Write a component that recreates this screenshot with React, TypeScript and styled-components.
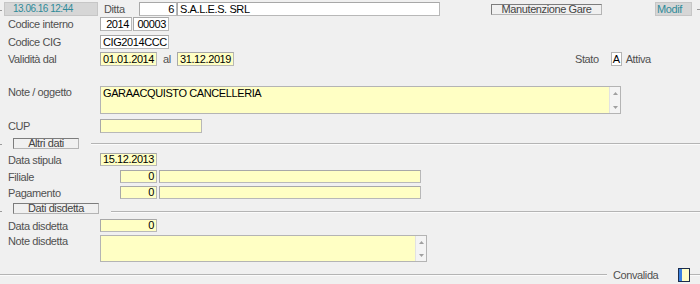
import React from "react";
import styled, { createGlobalStyle } from "styled-components";

const GlobalStyle = createGlobalStyle`
  html, body { margin: 0; padding: 0; background: #f0f0f0; }
  body {
    font-family: "Liberation Sans", Arial, sans-serif;
    font-size: 11px;
    letter-spacing: -0.4px;
    color: #505050;
  }
  * { box-sizing: border-box; }
`;

const Page = styled.div`
  width: 700px;
  height: 284px;
  overflow: hidden;
  display: flex;
  flex-direction: column;
  padding-top: 1px;
  background: #f0f0f0;
`;

const Row = styled.div<{ $h: number; $mt?: number }>`
  display: flex;
  align-items: center;
  height: ${(p) => p.$h}px;
  margin-top: ${(p) => p.$mt ?? 0}px;
  flex: none;
`;

const Label = styled.div<{ $w?: number; $ml?: number; $top?: boolean }>`
  width: ${(p) => p.$w ?? 100}px;
  margin-left: ${(p) => p.$ml ?? 0}px;
  padding-left: ${(p) => (p.$ml !== undefined ? 0 : 8)}px;
  flex: none;
  color: #505050;
  white-space: nowrap;
  ${(p) => (p.$top ? "align-self: flex-start; margin-top: 0px;" : "")}
`;

const Field = styled.div<{
  $w: number;
  $h?: number;
  $yellow?: boolean;
  $right?: boolean;
  $ml?: number;
}>`
  width: ${(p) => p.$w}px;
  height: ${(p) => p.$h ?? 14}px;
  margin-left: ${(p) => p.$ml ?? 0}px;
  flex: none;
  background: ${(p) => (p.$yellow ? "#ffffc4" : "#ffffff")};
  border: 1px solid #b8b8b8;
  border-top-color: #a8a8a8;
  border-left-color: #a8a8a8;
  color: #000;
  line-height: ${(p) => (p.$h ?? 14) - 2}px;
  padding: 0 2px;
  text-align: ${(p) => (p.$right ? "right" : "left")};
  white-space: nowrap;
  overflow: hidden;
`;

const Stamp = styled.div<{ $w: number; $ml: number; $pl: number; $size?: number }>`
  width: ${(p) => p.$w}px;
  height: 14px;
  margin-left: ${(p) => p.$ml}px;
  padding-left: ${(p) => p.$pl}px;
  flex: none;
  background: #d6d6d6;
  border: 1px solid #c6c6c6;
  color: #2f8b99;
  font-size: ${(p) => p.$size ?? 11}px;
  letter-spacing: ${(p) => (p.$size ? "-0.5px" : "-0.4px")};
  line-height: 12px;
  white-space: nowrap;
`;

const Button = styled.div<{ $w: number; $ml: number }>`
  width: ${(p) => p.$w}px;
  height: 11px;
  margin-left: ${(p) => p.$ml}px;
  flex: none;
  background: #f0f0f0;
  border: 1px solid;
  border-color: #7c7c7c #b4b4b4 #b4b4b4 #7c7c7c;
  color: #444;
  line-height: 9px;
  text-align: center;
  white-space: nowrap;
`;

const Tick = styled.div<{ $w: number; $ml?: number; $dy?: number }>`
  width: ${(p) => p.$w}px;
  height: 1px;
  margin-left: ${(p) => p.$ml ?? 0}px;
  margin-top: ${(p) => p.$dy ?? 0}px;
  flex: none;
  background: #9a9a9a;
`;

const Rule = styled.div<{ $ml?: number; $dy?: number; $w?: number }>`
  ${(p) => (p.$w ? `width: ${p.$w}px; flex: none;` : "flex: 1;")}
  height: 2px;
  margin-left: ${(p) => p.$ml ?? 0}px;
  margin-top: ${(p) => p.$dy ?? 0}px;
  border-top: 1px solid #b4b4b4;
  border-bottom: 1px solid #fbfbfb;
`;

const TextBox = styled.div<{ $w: number; $h: number }>`
  width: ${(p) => p.$w}px;
  height: ${(p) => p.$h}px;
  flex: none;
  display: flex;
  background: #ffffc4;
  border: 1px solid #b4b4b4;
  color: #000;
  align-self: flex-start;
`;

const TextArea = styled.div`
  flex: 1;
  padding: 0 2px;
  line-height: 12px;
  white-space: nowrap;
`;

const ScrollBar = styled.div`
  width: 11px;
  flex: none;
  display: flex;
  flex-direction: column;
  justify-content: space-between;
  align-items: center;
  padding: 5px 0 4px;
  background: #f4f4f4;
  border-left: 1px solid #e2e2e2;
`;

const Arrow = ({ up }: { up?: boolean }) => (
  <svg width="5" height="3" viewBox="0 0 5 3">
    <path d={up ? "M0 3 L2.5 0 L5 3 Z" : "M0 0 L2.5 3 L5 0 Z"} fill="#a0a0a0" />
  </svg>
);

const Check = styled.div`
  width: 12px;
  height: 14px;
  flex: none;
  margin-left: 20px;
  border: 1px solid #1c2c4c;
  background: linear-gradient(to right, #3b82e0 0 3px, #ffffc8 3px 100%);
`;

const Plain = styled.div<{ $ml: number }>`
  margin-left: ${(p) => p.$ml}px;
  flex: none;
  color: #505050;
  white-space: nowrap;
`;

const StatoBox = styled.div`
  width: 11px;
  height: 14px;
  margin-left: 12px;
  flex: none;
  background: #fff;
  border: 1px solid #b4b4b4;
  color: #000;
  text-align: center;
  line-height: 12px;
`;

const SectionRow = ({ title, bw, lineStart, dy }: { title: string; bw: number; lineStart: number; dy: number }) => (
  <>
    <Tick $w={2} $dy={dy} />
    <Button $w={bw} $ml={11}>
      {title}
    </Button>
    <Rule $ml={lineStart - 13 - bw} $dy={dy} />
  </>
);

export default function App() {
  return (
    <>
      <GlobalStyle />
      <Page>
        <Row $h={16}>
          <Tick $w={2} $dy={2} />
          <Stamp $w={94} $ml={2} $pl={8} $size={10}>13.06.16 12:44</Stamp>
          <Label $w={35} $ml={6}>Ditta</Label>
          <Field $w={38} $right>6</Field>
          <Field $w={263}>S.A.L.E.S. SRL</Field>
          <Button $w={111} $ml={51}>Manutenzione Gare</Button>
          <Stamp $w={37} $ml={53} $pl={1}>Modif</Stamp>
          <Tick $w={3} $ml={5} />
        </Row>

        <Row $h={14}>
          <Label>Codice interno</Label>
          <Field $w={32} $right>2014</Field>
          <Field $w={36} $ml={1} $right>00003</Field>
        </Row>

        <Row $h={14} $mt={4}>
          <Label>Codice CIG</Label>
          <Field $w={69}>CIG2014CCC</Field>
        </Row>

        <Row $h={14} $mt={3}>
          <Label>Validità dal</Label>
          <Field $w={57} $yellow $right>01.01.2014</Field>
          <Label $w={14} $ml={6}>al</Label>
          <Field $w={57} $yellow $right>31.12.2019</Field>
          <Plain $ml={341}>Stato</Plain>
          <StatoBox>A</StatoBox>
          <Plain $ml={4}>Attiva</Plain>
        </Row>

        <Row $h={28} $mt={20}>
          <Label $top>Note / oggetto</Label>
          <TextBox $w={521} $h={28}>
            <TextArea>GARAACQUISTO CANCELLERIA</TextArea>
            <ScrollBar>
              <Arrow up />
              <Arrow />
            </ScrollBar>
          </TextBox>
        </Row>

        <Row $h={14} $mt={5}>
          <Label>CUP</Label>
          <Field $w={102} $yellow />
        </Row>

        <Row $h={11} $mt={5}>
          <SectionRow title="Altri dati" bw={66} lineStart={91} dy={1} />
        </Row>

        <Row $h={13} $mt={4}>
          <Label>Data stipula</Label>
          <Field $w={57} $h={13} $yellow $right>15.12.2013</Field>
        </Row>

        <Row $h={13} $mt={4}>
          <Label $w={120}>Filiale</Label>
          <Field $w={37} $h={13} $yellow $right>0</Field>
          <Field $w={262} $h={13} $ml={2} $yellow />
        </Row>

        <Row $h={13} $mt={3}>
          <Label $w={120}>Pagamento</Label>
          <Field $w={37} $h={13} $yellow $right>0</Field>
          <Field $w={262} $h={13} $ml={2} $yellow />
        </Row>

        <Row $h={11} $mt={4}>
          <SectionRow title="Dati disdetta" bw={86} lineStart={111} dy={6} />
        </Row>

        <Row $h={13} $mt={5}>
          <Label>Data disdetta</Label>
          <Field $w={57} $h={13} $yellow $right>0</Field>
        </Row>

        <Row $h={27} $mt={3}>
          <Label $top>Note disdetta</Label>
          <TextBox $w={327} $h={27}>
            <TextArea />
            <ScrollBar>
              <Arrow up />
              <Arrow />
            </ScrollBar>
          </TextBox>
        </Row>

        <Row $h={14} $mt={6}>
          <Rule $w={607} />
          <Plain $ml={6}>Convalida</Plain>
          <Check />
          <Rule />
        </Row>
      </Page>
    </>
  );
}
